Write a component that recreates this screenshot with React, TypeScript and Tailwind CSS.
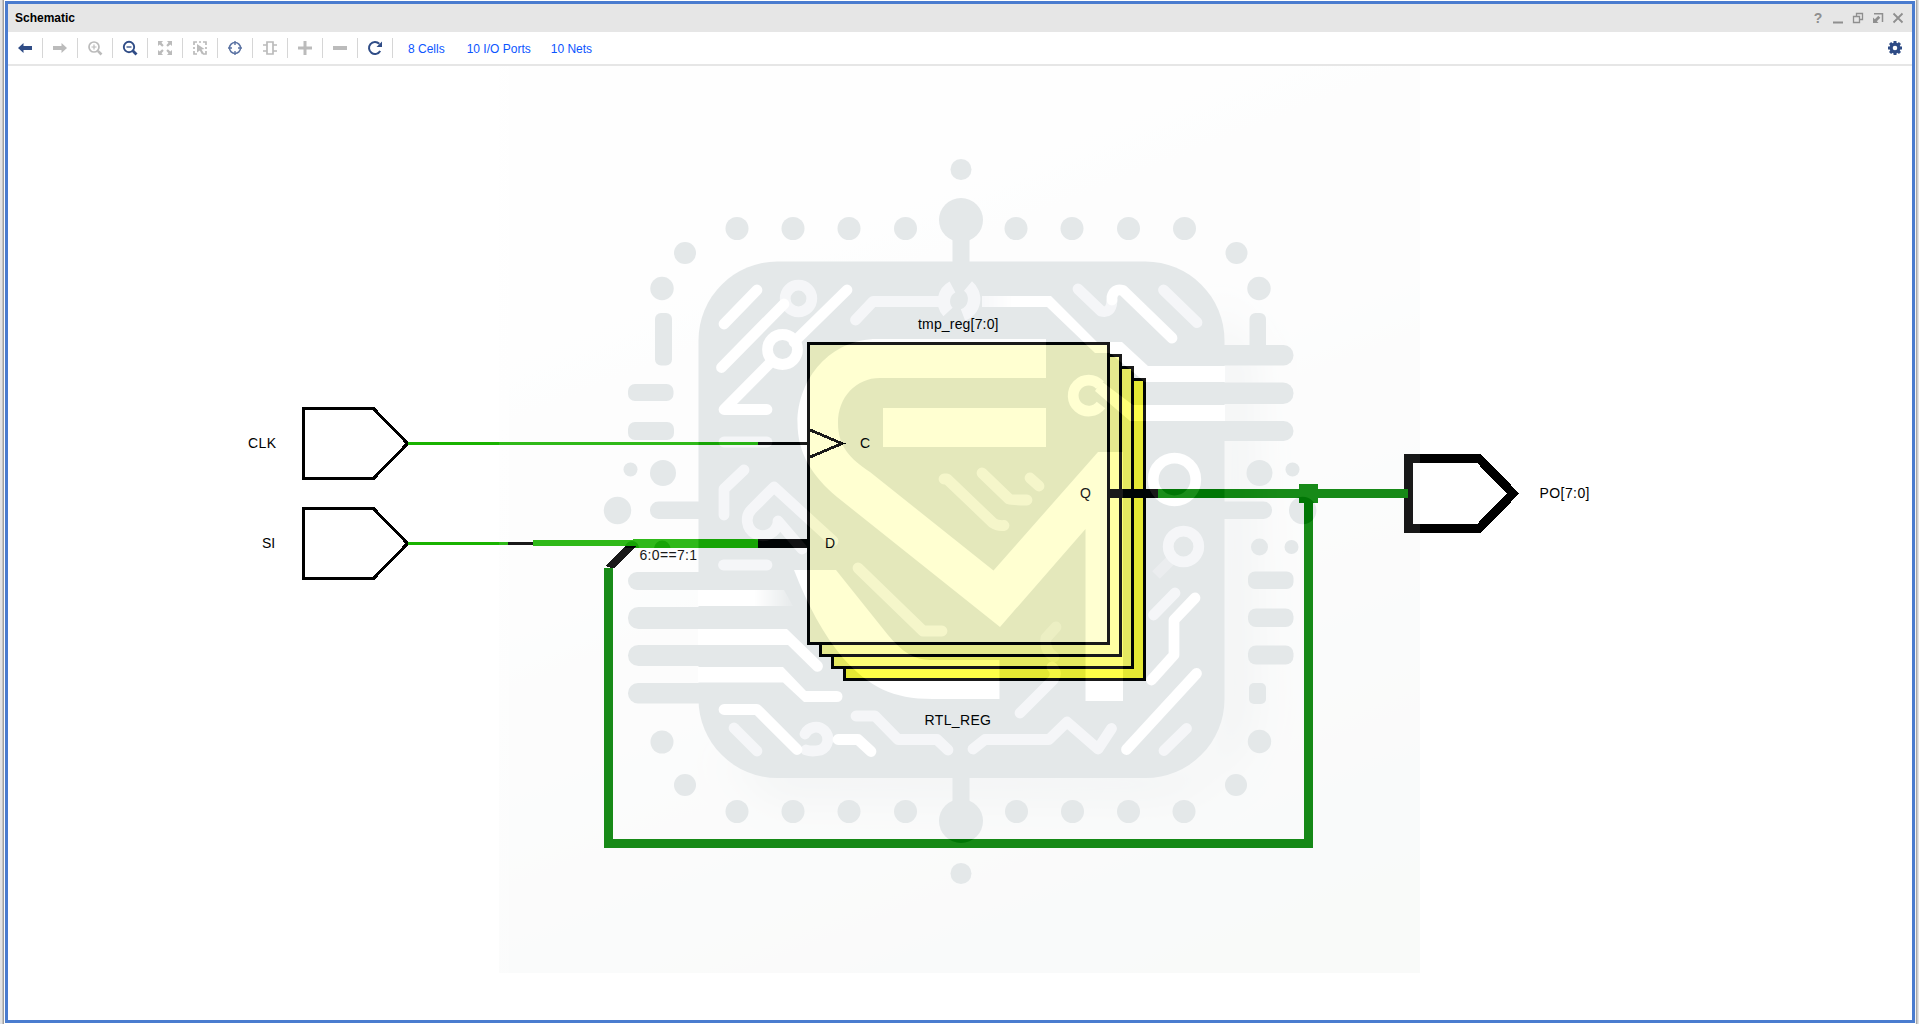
import type { ReactNode } from "react";

const NAVY = "#2f4c86";
const GRAY = "#bbbbbb";

function Icon({ children }: { children: ReactNode }) {
  return (
    <svg width="16" height="16" viewBox="0 0 16 16" fill="none">
      {children}
    </svg>
  );
}

const tools: { name: string; icon: ReactNode }[] = [
  { name: "Back", icon: <path d="M1 8 6.5 3v3H15v4H6.5v3Z" fill={NAVY} /> },
  { name: "Forward", icon: <path d="M15 8 9.5 3v3H1v4H9.5v3Z" fill={GRAY} /> },
  {
    name: "Zoom in",
    icon: (
      <>
        <circle cx="7" cy="7" r="5" stroke={GRAY} strokeWidth="1.7" />
        <path d="M4.5 7h5M7 4.5v5" stroke={GRAY} strokeWidth="1.2" />
        <path d="m10.8 10.8 3.7 3.7" stroke={GRAY} strokeWidth="2.6" />
      </>
    ),
  },
  {
    name: "Zoom out",
    icon: (
      <>
        <circle cx="7" cy="7" r="5.2" stroke={NAVY} strokeWidth="1.9" />
        <path d="M4.5 7h5" stroke={NAVY} strokeWidth="1.3" />
        <path d="m10.8 10.8 3.7 3.7" stroke={NAVY} strokeWidth="2.8" />
      </>
    ),
  },
  {
    name: "Fit",
    icon: (
      <path
        d="M1 1h5L4.500 2.700 6.700 5.200 5.200 6.700 2.700 4.500 1 6ZM15 1v5l-1.700-1.500-2.500 2.200-1.500-1.500 2.200-2.500L10 1ZM1 15v-5l1.700 1.500 2.500-2.200 1.500 1.500-2.200 2.500L6 15ZM15 15h-5l1.500-1.700-2.200-2.500 1.500-1.500 2.500 2.200L15 10Z"
        fill={GRAY}
      />
    ),
  },
  {
    name: "Select area",
    icon: (
      <>
        <path d="M2 5V2h3M11 2h3v3M2 11v3h3M11 14h3v-3M7 2h2M2 7v2M14 7v2" stroke={GRAY} strokeWidth="1.7" />
        <path d="M5 4l7.500 5-3 .5 2.500 4-2 1-2.200-4L5 12.500Z" fill={GRAY} />
      </>
    ),
  },
  {
    name: "Target",
    icon: (
      <>
        <circle cx="8" cy="8" r="5.500" stroke="#5b73a3" strokeWidth="1.500" />
        <path d="M8 1v4M8 11v4M1 8h4M11 8h4" stroke="#5b73a3" strokeWidth="1.400" />
      </>
    ),
  },
  {
    name: "Cell",
    icon: <path d="M5 2h6v12H5ZM1 5h4M1 11h4M11 5h4M11 11h4" stroke={GRAY} strokeWidth="1.700" />,
  },
  { name: "Expand", icon: <path d="M8 1v14M1 8h14" stroke={GRAY} strokeWidth="3" /> },
  { name: "Collapse", icon: <path d="M1 8h14" stroke={GRAY} strokeWidth="4" /> },
  {
    name: "Refresh",
    icon: (
      <>
        <path d="M13.200 11A6 6 0 1 1 12.300 3.800" stroke={NAVY} strokeWidth="2" />
        <path d="M15 1.500v5.500H9.500Z" fill={NAVY} />
      </>
    ),
  },
];

const links = [
  { label: "8 Cells", gap: "ml-[15px]" },
  { label: "10 I/O Ports", gap: "ml-[22px]" },
  { label: "10 Nets", gap: "ml-[20px]" },
];

function TitleBar() {
  return (
    <header className="flex h-7 shrink-0 items-center justify-between bg-[#e6e6e6] pl-[7px] pr-[6px]">
      <h1 className="text-[12px] font-bold leading-4 text-black">Schematic</h1>
      <div className="flex gap-1 text-[#8f8f8f]">
        <span className="w-4 text-center text-[14px] font-bold leading-4">?</span>
        <Icon>
          <path d="M3 12.500h10" stroke="#8f8f8f" strokeWidth="2" />
        </Icon>
        <Icon>
          <path d="M6.500 7V3.500h6V9.500H9.500M3.500 6.500h6v6h-6Z" stroke="#8f8f8f" strokeWidth="1.300" />
        </Icon>
        <Icon>
          <path d="M4 3.700h8.500V12" stroke="#8f8f8f" strokeWidth="1.500" />
          <path d="M3 7.500v5.500h5.500L6.800 11.300 10.300 7.800 8.300 5.800 4.800 9.300Z" fill="#8f8f8f" />
        </Icon>
        <Icon>
          <path d="m3.500 3.500 9 9m0-9-9 9" stroke="#8f8f8f" strokeWidth="1.800" />
        </Icon>
      </div>
    </header>
  );
}

const teeth = [0, 45, 90, 135, 180, 225, 270, 315];

function Toolbar() {
  return (
    <nav className="flex h-[34px] shrink-0 items-start border-b-2 border-[#e6e6e6] bg-white">
      {tools.map((t) => (
        <div key={t.name} title={t.name} className="flex h-8 w-[35px] shrink-0 items-center">
          <div className="flex w-[34px] justify-center">
            <Icon>{t.icon}</Icon>
          </div>
          <div className="h-5 w-px bg-[#d6d6d6]" />
        </div>
      ))}
      {links.map((l) => (
        <a key={l.label} className={`${l.gap} text-[12px] leading-[35px] text-[#0b55ff]`}>
          {l.label}
        </a>
      ))}
      <div className="ml-auto mr-[9px] flex h-8 items-center">
        <Icon>
          <circle cx="8" cy="8" r="3.900" stroke={NAVY} strokeWidth="3.200" />
          {teeth.map((a) => (
            <path key={a} d="M6.500 1h3v2.500h-3Z" fill={NAVY} transform={`rotate(${a} 8 8)`} />
          ))}
        </Icon>
      </div>
    </nav>
  );
}

const dots: [number, number, number][] = [
  [961, 169.5, 10.5], [961, 220, 22], [961, 821, 22], [961, 873.5, 10.5],
  [737, 228.5, 11.5], [793, 228.5, 11.5], [849, 228.5, 11.5], [905.5, 228.5, 11.5],
  [1016, 228.5, 11.5], [1072, 228.5, 11.5], [1128.5, 228.5, 11.5], [1184.5, 228.5, 11.5],
  [737, 811.5, 11.5], [793, 811.5, 11.5], [849, 811.5, 11.5], [905.5, 811.5, 11.5],
  [1016.5, 811.5, 11.5], [1072.5, 811.5, 11.5], [1128.5, 811.5, 11.5], [1184, 811.5, 11.5],
  [685, 253, 11], [1236.5, 253, 11], [662, 288.5, 11.7], [1259, 288.5, 11.7],
  [662, 742, 11.5], [685, 785, 11], [1259.5, 741.5, 11.7], [1236, 785, 11],
  [630.5, 469.5, 7], [663, 473, 13], [617.5, 510.5, 13.7],
  [1259.5, 473, 13], [1292.5, 469.5, 7], [1302.7, 510.5, 13.7], [1259.5, 547, 8.5], [1291.5, 547, 7],
];

const bars: [number, number, number, number, number][] = [
  [952.5, 220, 17, 50, 0], [952.5, 770, 17, 50, 0],
  [655, 313, 17, 52.5, 6], [1249.5, 313, 16.5, 45, 6],
  [628, 384, 45.5, 17, 7], [628, 422, 46, 18, 7],
  [1150, 345, 143.5, 20.5, 10], [1150, 382.5, 143.5, 21.5, 10.5], [1150, 421, 143.5, 20, 10],
  [628, 572, 100, 18, 9], [628, 607, 100, 22, 10.5], [628, 645, 100, 21, 10.5], [628, 683, 100, 20.5, 10],
  [650, 501.5, 70, 17.5, 8.5], [1200, 501.5, 72, 17.5, 8.5],
  [1248, 571.5, 45.5, 17.5, 7], [1248, 608.5, 45.5, 18.5, 8], [1248, 645.5, 45.5, 19, 8],
  [1249, 683, 17, 21, 5],
];

const bright = [
  "M757 290 724 324",
  "M721.5 367.5 784 304",
  "M847 290 794 342M771 362 724 409.5H767",
  "M1112 300V297Q1114 288 1123 290.5L1172 338",
  "M1195 598 1174 620V655L1151.5 680",
  "M1196.5 673.5 1126.5 749.5",
  "M724 709.5H757L797 749.5",
  "M838 739.5H858L871 751.5",
];

const faint = [
  "M855.5 320 873 301.5H942",
  "M724 442H767",
  "M1078 289 1101 311Q1111 314 1112 301",
  "M1163.5 290 1197 322.5",
  "M1175 593 1153.5 615",
  "M1186.5 728.5 1164 750.5",
  "M973 749 985 739.5H1049L1067 722 1098 749 1111.5 728.5",
  "M1020 713 1053 680Q1058 673 1052 667",
  "M734 728 757 751",
  "M856 716H875L898 739.5H937L948 750",
  "M744 470 724 489V515",
  "M833 541 774 487 752 509A15.5 15.5 0 1 0 778 523V521L802 549",
  "M723.5 565H767",
  "M944 479H947L993 523Q997 526 1004 525.5",
  "M982 473 1009 499Q1012 500 1027 500",
  "M1030 478 1039 486",
  "M858 568 923 631H942",
  "M805 734A12 12 0 1 1 821 750Q812 752 806 750",
];

function Watermark() {
  return (
    <g opacity="0.1">
      <rect x="499" y="64" width="921" height="909" fill="url(#paper)" />
      <g filter="url(#soft)">
        <path d="M720 760 780 800H1150Q1250 790 1255 700V360L1215 300V770Z" fill="#5a7076" opacity="0.6" />
      </g>
      <g fill="#002633">
        <rect x="698.5" y="261.5" width="526" height="516.5" rx="79" />
        {dots.map(([x, y, r]) => (
          <circle key={`${x}-${y}`} cx={x} cy={y} r={r} />
        ))}
        {bars.map(([x, y, w, h, r]) => (
          <rect key={`${x}-${y}`} x={x} y={y} width={w} height={h} rx={r} />
        ))}
        <path d="M654 548A8.300 8.300 0 0 1 670.500 548ZM625 548A7 7 0 0 1 639 548Z" />
      </g>
      {/* channels cut through the chip body */}
      <g fill="#fff">
        <path d="M982 296H1051L1097 342H1122L1148 366H1225V382H1145L1110 353H1095L1047 307H982Z" fill="url(#fadeIn)" />
        <path d="M1101 381 1133 405H1225V421H1130L1095 391Z" />
        <path d="M698 590H784L793 606H698Z" fill="url(#fade)" />
        <path d="M698 629H787L821.5 662.5A5.5 5.5 0 0 1 814 670.5L788 645H698Z" />
        <path d="M698 667H783L806 691H837A5.5 5.5 0 0 1 837 702H804L783 682.5H698Z" />
      </g>
      {/* central emblem */}
      <g fill="#fff">
        <path d="M1046 339H877C831 339 797.5 378 797.5 423C797.5 453 812 476 837 497L1000 627 1085.5 529V701H1123V452H1098L993.5 570.5 870 472C850 459 838 446 838 423C838 397 856 378 880 378H1046Z" />
        <path d="M883 408H1046V447H883Z" />
        <path d="M794 570H836L888 635C902 652 915 660 930 660H999.5V699H932C893 699 869 687 843 658C823 634 808 606 794 570Z" />
      </g>
      <g fill="none" strokeWidth="10.800" strokeLinecap="round" strokeLinejoin="round">
        <g stroke="#a4b0c2">
          {faint.map((d) => (
            <path key={d} d={d} />
          ))}
          <path d="M1054 657Q1044 650 1046 638L1056 627" opacity="0.5" />
          <path d="M1176 555 1156 575" opacity="0.4" strokeLinecap="butt" />
          <circle cx="798.500" cy="298.500" r="13.300" />
          <circle cx="1183.500" cy="546.500" r="15.300" />
          <path d="M952.500 287A16 16 0 0 0 948 312M968 286A17 17 0 0 1 963 315" strokeWidth="12.500" strokeLinecap="butt" />
        </g>
        <g stroke="#fff">
          {bright.map((d) => (
            <path key={d} d={d} />
          ))}
          <circle cx="782.500" cy="349.500" r="15" />
          <circle cx="1174.500" cy="479.500" r="21.300" />
          <path d="M1101 405A15.500 15.500 0 1 1 1100 385" strokeLinecap="butt" />
        </g>
      </g>
    </g>
  );
}

const layers = [
  { o: 36, c: "#ffff33" },
  { o: 24, c: "#ffff66" },
  { o: 12, c: "#ffff99" },
  { o: 0, c: "#ffffcc" },
];

const labels: [number, number, string, number?][] = [
  [248, 447.7, "CLK", 28],
  [262, 547.7, "SI"],
  [918, 329, "tmp_reg[7:0]", 80.5],
  [860, 447.7, "C"],
  [825, 547.7, "D"],
  [1080, 497.7, "Q"],
  [924.5, 725, "RTL_REG", 66.5],
  [639.5, 560, "6:0==7:1", 57.5],
  [1539.5, 497.7, "PO[7:0]", 50],
];

function Schematic() {
  return (
    <svg className="block h-[954px] w-[1904px]" viewBox="8 66 1904 954">
      <defs>
        <linearGradient id="paper" x1="0.3" y1="0" x2="0.7" y2="1">
          <stop offset="0" stopColor="#fbfbfb" />
          <stop offset="0.4" stopColor="#f0f1f1" />
          <stop offset="1" stopColor="#c8d1cf" />
        </linearGradient>
        <linearGradient id="fade" x1="0" y1="0" x2="1" y2="0">
          <stop offset="0.6" stopColor="#fff" />
          <stop offset="1" stopColor="#fff" stopOpacity="0.1" />
        </linearGradient>
        <linearGradient id="fadeIn" x1="0" y1="0" x2="1" y2="0">
          <stop offset="0" stopColor="#b4bfce" />
          <stop offset="0.12" stopColor="#fff" />
        </linearGradient>
        <filter id="soft" x="-20%" y="-20%" width="140%" height="140%">
          <feGaussianBlur stdDeviation="18" />
        </filter>
      </defs>

      <g shapeRendering="crispEdges">
        {layers.map(({ o, c }) => (
          <rect key={o} x={808.5 + o} y={343.5 + o} width="300" height="300" fill={c} stroke="#000" strokeWidth="3" />
        ))}
        <path d="M809 429.500 842 443.500 809 457.500" fill="none" stroke="#000" strokeWidth="2.800" />

        <g fill="#fff" stroke="#000" strokeWidth="3">
          <path d="M303.500 408.500H373.500L407.500 443.500 373.500 478.500H303.500Z" />
          <path d="M303.500 508.500H373.500L407.500 543.500 373.500 578.500H303.500Z" />
          <path d="M1408.500 458.500H1479L1513 493.500 1479 528.500H1408.500Z" strokeWidth="9" />
        </g>

        <path
          d="M408 442H758V445H408ZM408 542H508V545H408ZM533 540H633V546H533ZM633 539H758V548H633Z"
          fill="#19b300"
        />
        <g fill="#000">
          <path d="M758 442H808V445H758ZM758 539H808V548H758ZM508 542H533V545H508ZM1109 489H1158V498H1109Z" />
          <path d="M625 546H636L614 568.500 605 566Z" />
        </g>
        <g fill="#008000">
          <path d="M1158 489H1408V498H1158ZM1299 484H1318V503H1299Z" />
          <path d="M604 568H613V839H1304V503H1313V848H604Z" />
        </g>
      </g>

      <g fontSize="14" fill="#000">
        {labels.map(([x, y, s, w]) => (
          <text key={s} x={x} y={y} textLength={w}>
            {s}
          </text>
        ))}
      </g>

      <Watermark />
    </svg>
  );
}

export default function App() {
  return (
    <div className="flex h-[1024px] w-[1919px] overflow-hidden bg-white font-['Liberation_Sans',Arial,sans-serif]">
      <div className="flex w-[5px] shrink-0">
        <div className="w-[2px] bg-[#e4e4e4]" />
        <div className="w-px bg-[#c4c4c4]" />
        <div className="w-px bg-[#a0a0a0]" />
      </div>
      <main className="mt-px flex h-[1022px] w-[1910px] shrink-0 flex-col border-[3px] border-[#4a7ccf] bg-white">
        <TitleBar />
        <Toolbar />
        <Schematic />
      </main>
      <div className="flex w-1 shrink-0">
        <div className="w-px bg-[#f5f5f5]" />
        <div className="w-px bg-[#a8a8a8]" />
        <div className="w-px bg-[#cccccc]" />
        <div className="w-px bg-[#e4e4e4]" />
      </div>
    </div>
  );
}
